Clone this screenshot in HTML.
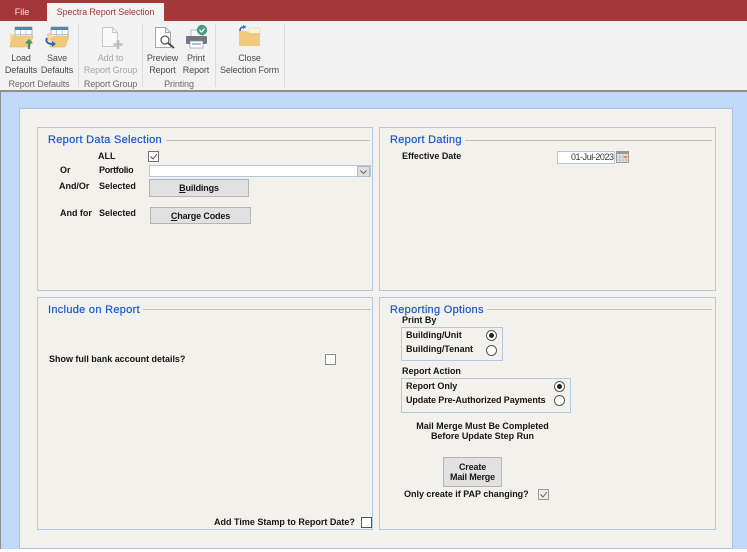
<!DOCTYPE html>
<html><head><meta charset="utf-8">
<style>
html,body{margin:0;padding:0;width:747px;height:552px;overflow:hidden;background:#fff}
body{position:relative;font-family:"Liberation Sans",sans-serif}
.a{position:absolute}
.t{position:absolute;font:bold 9px/11px "Liberation Sans",sans-serif;color:#161616;white-space:nowrap;letter-spacing:-.02px}
.r{position:absolute;font:9px/12px "Liberation Sans",sans-serif;color:#4a4a4a;white-space:nowrap;text-align:center;letter-spacing:-.1px}
.g{color:#a6a6a6}
.box{position:absolute;border:1px solid #b3c9e2;box-sizing:border-box}
.h{position:absolute;font:11px/13px "Liberation Sans",sans-serif;color:#1a56d0;white-space:nowrap;letter-spacing:.3px;-webkit-text-stroke:.2px #1a56d0}
.ln{position:absolute;height:1px;background:#c4bfb0}
.btn{position:absolute;box-sizing:border-box;background:#e1e1e1;border:1px solid #b4b4b4;font:bold 9px/11px "Liberation Sans",sans-serif;color:#161616;text-align:center;letter-spacing:-.15px}
.cb{position:absolute;width:11px;height:11px;box-sizing:border-box;border:1px solid #707070;background:#fdfdfd}
.rd{position:absolute;width:11px;height:11px;box-sizing:border-box;border:1px solid #555;border-radius:50%;background:#fff}
.rd i{position:absolute;left:2px;top:2px;width:5px;height:5px;border-radius:50%;background:#222}
.sep{position:absolute;top:24px;width:1px;height:63px;background:#dcdcdc}
</style></head><body>
<!-- title bar -->
<div class="a" style="left:0;top:0;width:747px;height:21px;background:#a4373a"></div>
<div class="a" style="left:47px;top:3px;width:117px;height:19px;background:#f3f3f3"></div>
<div class="a" style="left:0;top:4px;width:44px;text-align:center;font:9px/16px 'Liberation Sans',sans-serif;color:#f6e6e6">File</div>
<div class="a" style="left:47px;top:4px;width:117px;text-align:center;font:9px/16px 'Liberation Sans',sans-serif;letter-spacing:-.1px;color:#a4373a">Spectra Report Selection</div>
<!-- ribbon -->
<div class="a" style="left:0;top:21px;width:747px;height:69px;background:#f2f2f2"></div>
<div class="a" style="left:0;top:90px;width:747px;height:2px;background:#8f8f8f"></div>
<div class="sep" style="left:78px"></div>
<div class="sep" style="left:142px"></div>
<div class="sep" style="left:215px"></div>
<div class="sep" style="left:284px"></div>

<svg class="a" style="left:0;top:21px" width="290" height="36" viewBox="0 21 290 36">
 <!-- load -->
 <g>
  <rect x="15" y="27" width="17" height="12" fill="#fff" stroke="#7d97b5" stroke-width=".7"/>
  <rect x="15" y="27" width="17" height="3" fill="#5d82ad"/>
  <path d="M20.500 30v9M26 30v9M15 34.500h17" stroke="#9fb6d0" stroke-width=".7"/>
  <path d="M10 34h5v13H10z" fill="#f5d79c"/>
  <path d="M10 47l4-11h19l-3 11z" fill="#f1ca7e" stroke="#dcae62" stroke-width=".5"/>
  <path d="M29 49v-8" stroke="#3f8f80" stroke-width="2.200"/>
  <path d="M25 43.500l4-4.500 4 4.500z" fill="#3f8f80"/>
 </g>
 <!-- save -->
 <g>
  <rect x="51" y="27" width="17" height="12" fill="#fff" stroke="#7d97b5" stroke-width=".7"/>
  <rect x="51" y="27" width="17" height="3" fill="#5d82ad"/>
  <path d="M56.500 30v9M62 30v9M51 34.500h17" stroke="#9fb6d0" stroke-width=".7"/>
  <path d="M47 33h4v8h-4z" fill="#f5d79c"/>
  <path d="M50 47l3-11h16l-4 11z" fill="#f1ca7e" stroke="#dcae62" stroke-width=".5"/>
  <path d="M47 38c-2 4 1 6 6 6" fill="none" stroke="#2b6cb8" stroke-width="2"/>
  <path d="M52 41l4 3-4 3z" fill="#2b6cb8"/>
 </g>
 <!-- add -->
 <path d="M102.500 27.500h10l5 5v14h-15z" fill="#f8f8f8" stroke="#c9c9c9"/>
 <path d="M112.500 27.500v5h5" fill="none" stroke="#c9c9c9"/>
 <path d="M118 40v9M113.500 44.500h9" stroke="#bdbdbd" stroke-width="2.600"/>
 <!-- preview -->
 <path d="M155.500 27.500h10l5 5v15h-15z" fill="#fff" stroke="#a5a5a5"/>
 <path d="M165.500 27.500v5h5" fill="none" stroke="#a5a5a5"/>
 <circle cx="165" cy="40" r="4" fill="#fff" stroke="#5a5a5a" stroke-width="1.300"/>
 <path d="M168 43l6 5" stroke="#4a4a4a" stroke-width="2"/>
 <!-- print -->
 <rect x="191" y="30" width="12" height="7" fill="#f6f6f6" stroke="#999" stroke-width=".6"/>
 <rect x="186" y="36" width="21" height="8" rx="1" fill="#6f7882"/>
 <rect x="190" y="41" width="13" height="7" fill="#fff" stroke="#888" stroke-width=".6"/>
 <path d="M192 44h9" stroke="#4b86c4" stroke-width="1"/>
 <circle cx="202" cy="30" r="5.200" fill="#4d9a86"/>
 <path d="M199.500 30l2 2 3-3.500" fill="none" stroke="#fff" stroke-width="1.200"/>
 <!-- close -->
 <path d="M249 28h10l1 2v4h-11z" fill="#fbf3e2" stroke="#e6c283" stroke-width=".5"/>
 <path d="M239 31h8l2 2h11v13h-21z" fill="#f1ca7e"/>
 <path d="M240 31c0-3 1.500-4 3.500-4" fill="none" stroke="#2b6cb8" stroke-width="1.600"/>
 <path d="M243 25l3.500 2-3.500 2z" fill="#2b6cb8"/>
</svg>

<div class="r" style="left:0;top:52px;width:42px">Load<br>Defaults</div>
<div class="r" style="left:36px;top:52px;width:42px">Save<br>Defaults</div>
<div class="r g" style="left:80px;top:52px;width:61px">Add to<br>Report Group</div>
<div class="r" style="left:143px;top:52px;width:39px">Preview<br>Report</div>
<div class="r" style="left:178px;top:52px;width:36px">Print<br>Report</div>
<div class="r" style="left:215px;top:52px;width:69px">Close<br>Selection Form</div>
<div class="r" style="left:0;top:78px;width:78px;color:#6a6a6a">Report Defaults</div>
<div class="r" style="left:80px;top:78px;width:61px;color:#6a6a6a">Report Group</div>
<div class="r" style="left:143px;top:78px;width:72px;color:#6a6a6a">Printing</div>

<!-- main background -->
<div class="a" style="left:0;top:92px;width:747px;height:460px;background:#c2d8f8"></div>
<div class="a" style="left:0;top:92px;width:1px;height:458px;background:#8f8f8f"></div>
<div class="a" style="left:0;top:549px;width:747px;height:3px;background:#fff"></div>
<div class="a" style="left:19px;top:108px;width:714px;height:441px;box-sizing:border-box;background:#f3f1ec;border:1px solid #a9c3e4"></div>

<!-- boxes -->
<div class="box" style="left:37px;top:127px;width:336px;height:164px"></div>
<div class="box" style="left:379px;top:127px;width:337px;height:164px"></div>
<div class="box" style="left:37px;top:297px;width:336px;height:233px"></div>
<div class="box" style="left:379px;top:297px;width:337px;height:233px"></div>

<div class="h" style="left:48px;top:134px">Report Data Selection</div>
<div class="ln" style="left:166px;top:140px;width:204px"></div>
<div class="h" style="left:390px;top:134px">Report Dating</div>
<div class="ln" style="left:465px;top:140px;width:247px"></div>
<div class="h" style="left:48px;top:304px">Include on Report</div>
<div class="ln" style="left:143px;top:309px;width:228px"></div>
<div class="h" style="left:390px;top:304px">Reporting Options</div>
<div class="ln" style="left:487px;top:309px;width:225px"></div>

<!-- report data selection -->
<div class="t" style="left:98px;top:151px">ALL</div>
<div class="cb" style="left:148px;top:151px"></div>
<svg class="a" style="left:148px;top:151px" width="11" height="11"><path d="M2.500 5.500l2.500 2.500 4-5" fill="none" stroke="#555" stroke-width="1"/></svg>
<div class="t" style="left:60px;top:165px">Or</div>
<div class="t" style="left:99px;top:165px;letter-spacing:-.3px">Portfolio</div>
<div class="a" style="left:149px;top:165px;width:222px;height:12px;box-sizing:border-box;background:#fff;border:1px solid #b5c7dc"></div>
<div class="a" style="left:357px;top:166px;width:13px;height:11px;box-sizing:border-box;background:#dedede;border:1px solid #bbb"></div>
<svg class="a" style="left:357px;top:166px" width="13" height="11"><path d="M3.500 4.500l3 3 3-3" fill="none" stroke="#666" stroke-width="1"/></svg>
<div class="t" style="left:59px;top:181px">And/Or</div>
<div class="t" style="left:99px;top:181px">Selected</div>
<div class="btn" style="left:149px;top:179px;width:100px;height:18px;padding-top:3px"><u>B</u>uildings</div>
<div class="t" style="left:60px;top:208px">And for</div>
<div class="t" style="left:99px;top:208px">Selected</div>
<div class="btn" style="left:150px;top:207px;width:101px;height:17px;padding-top:3px"><u>C</u>harge Codes</div>

<!-- report dating -->
<div class="t" style="left:402px;top:151px">Effective Date</div>
<div class="a" style="left:557px;top:151px;width:58px;height:13px;box-sizing:border-box;background:#fff;border:1px solid #b5c7dc"></div>
<div class="a" style="left:571px;top:151px;font:9px/13px 'Liberation Sans',sans-serif;color:#333;letter-spacing:-.45px">01-Jul-2023</div>
<svg class="a" style="left:616px;top:151px" width="13" height="12"><rect x=".5" y=".5" width="12" height="11" fill="#e9e6e0" stroke="#999"/><rect x="1" y="1" width="11" height="2" fill="#9a9a9a"/><path d="M1 6h11M1 9h11M4 3v8M7 3v8M10 3v8" stroke="#b5b5b5" stroke-width=".7"/><rect x="8" y="5" width="3" height="2" fill="#e58b4a"/></svg>

<!-- include -->
<div class="t" style="left:49px;top:354px">Show full bank account details?</div>
<div class="cb" style="left:325px;top:354px;border-color:#8a8a8a"></div>
<div class="t" style="left:214px;top:517px;letter-spacing:0">Add Time Stamp to Report Date?</div>
<div class="cb" style="left:361px;top:517px;background:#fff;border-color:#555"></div>

<!-- reporting options -->
<div class="t" style="left:402px;top:315px">Print By</div>
<div class="box" style="left:401px;top:327px;width:102px;height:34px"></div>
<div class="t" style="left:406px;top:330px">Building/Unit</div>
<div class="rd" style="left:486px;top:330px"><i></i></div>
<div class="t" style="left:406px;top:344px">Building/Tenant</div>
<div class="rd" style="left:486px;top:345px"></div>
<div class="t" style="left:402px;top:366px">Report Action</div>
<div class="box" style="left:401px;top:378px;width:170px;height:35px"></div>
<div class="t" style="left:406px;top:381px">Report Only</div>
<div class="rd" style="left:554px;top:381px"><i></i></div>
<div class="t" style="left:406px;top:395px;letter-spacing:-.1px">Update Pre-Authorized Payments</div>
<div class="rd" style="left:554px;top:395px"></div>
<div class="t" style="left:392px;top:421px;width:181px;text-align:center">Mail Merge Must Be Completed</div>
<div class="t" style="left:392px;top:431px;width:181px;text-align:center">Before Update Step Run</div>
<div class="btn" style="left:443px;top:457px;width:59px;height:30px;padding-top:4px;line-height:10px">Create<br>Mail Merge</div>
<div class="t" style="left:404px;top:489px">Only create if PAP changing?</div>
<div class="cb" style="left:538px;top:489px;background:#ececec;border-color:#9a9a9a"></div>
<svg class="a" style="left:538px;top:489px" width="11" height="11"><path d="M2.500 5.500l2.500 2.500 4-5" fill="none" stroke="#666" stroke-width="1"/></svg>
</body></html>
